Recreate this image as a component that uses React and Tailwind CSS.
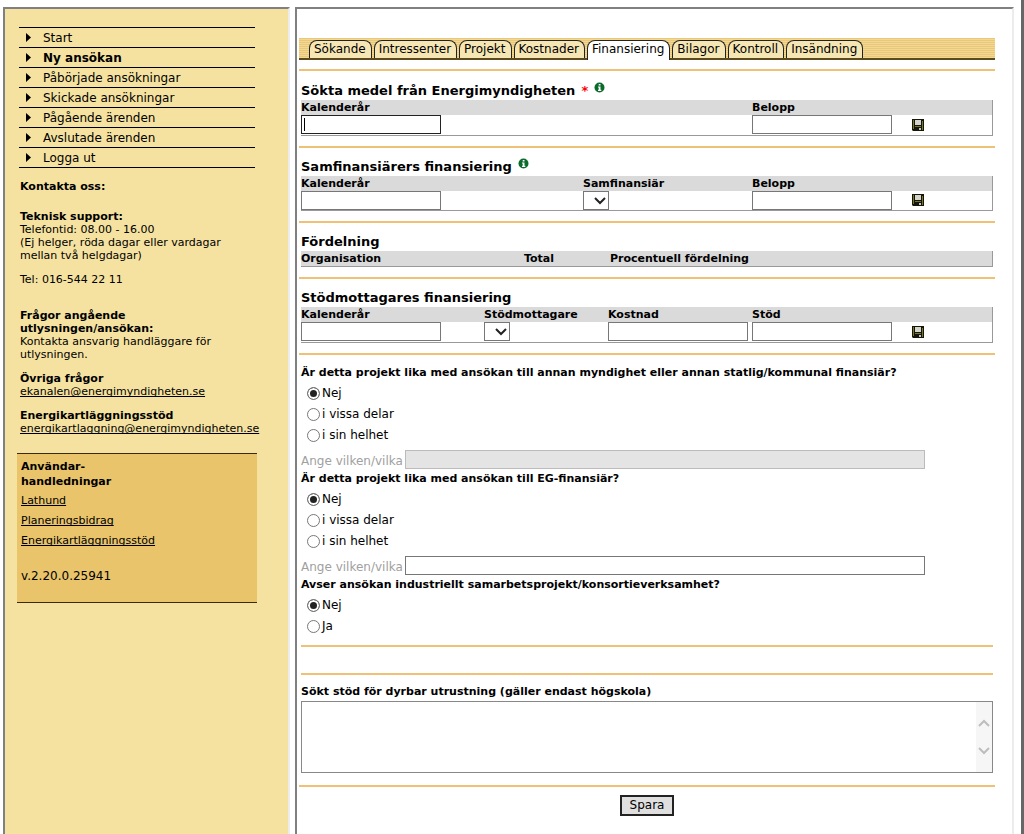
import React, { useState } from "react";
import clsx from "clsx";

const menuItems = [
  { label: "Start" },
  { label: "Ny ansökan", active: true },
  { label: "Påbörjade ansökningar" },
  { label: "Skickade ansökningar" },
  { label: "Pågående ärenden" },
  { label: "Avslutade ärenden" },
  { label: "Logga ut" },
];

const tabs = [
  "Sökande",
  "Intressenter",
  "Projekt",
  "Kostnader",
  "Finansiering",
  "Bilagor",
  "Kontroll",
  "Insändning",
];

const guides = ["Lathund", "Planeringsbidrag", "Energikartläggningsstöd"];

function Rule() {
  return <hr className="h-[2px] border-0 bg-[#efc177]" />;
}

function InfoIcon() {
  return (
    <svg className="mb-[7px] h-[11px] w-[11px]" viewBox="0 0 11 11" role="img" aria-label="Information">
      <circle cx="5.5" cy="5.5" r="5" fill="#0b6b2b" />
      <path d="M4.7 2h1.8v1.5H4.7zM4 4.5h2.5v3.3h.8V9H4V7.8h.7V5.6H4z" fill="#fff" />
    </svg>
  );
}

function SaveButton() {
  return (
    <button type="button" aria-label="Spara rad" className="block cursor-pointer">
      <svg className="h-3 w-3" viewBox="0 0 12 12">
        <path d="M0 0h12v12H1L0 11z" fill="#15150a" />
        <path d="M1 1h1v9H1zM10 2h1v9h-1zM3 7h6v1H3z" fill="#77772a" />
        <path d="M3 1h6v5H3z" fill="#d4d4cc" />
        <path d="M7 9h2v2H7z" fill="#c8c8c0" />
      </svg>
    </button>
  );
}

function TextField({ label, focused }) {
  return (
    <div className="relative w-[140px]">
      <input
        type="text"
        aria-label={label}
        className={clsx(
          "block h-[19px] w-full border bg-white px-1 text-xs outline-none",
          focused ? "border-[#222]" : "border-[#777]"
        )}
      />
      {focused && <span className="absolute top-[3px] left-[3px] h-[13px] w-px bg-black" />}
    </div>
  );
}

function DropDown({ label }) {
  return (
    <div className="relative w-[26px]">
      <select
        aria-label={label}
        className="block h-[19px] w-full appearance-none border border-[#777] bg-white text-xs"
      />
      <svg
        className="pointer-events-none absolute top-[6px] right-[3px] h-[8px] w-[12px]"
        viewBox="0 0 12 8"
        fill="none"
        stroke="#222"
        strokeWidth="2"
      >
        <path d="M1 1l5 5 5-5" />
      </svg>
    </div>
  );
}

function FormTable({ columns, noRow }) {
  return (
    <table className="w-full table-fixed border-collapse border-r border-b border-[#999] text-left">
      <colgroup>
        {columns.map((col, i) => (
          <col key={i} className={col.width} />
        ))}
      </colgroup>
      <thead className="bg-[#dadada] text-[11px] leading-[15px]">
        <tr>
          {columns.map((col, i) => (
            <th key={i} className="p-0 font-bold whitespace-nowrap">
              {col.label}
            </th>
          ))}
        </tr>
      </thead>
      {!noRow && (
        <tbody>
          <tr className="h-5">
            {columns.map((col, i) => (
              <td key={i} className="p-0 align-middle">
                {col.type === "text" && <TextField label={col.label} focused={col.focused} />}
                {col.type === "select" && <DropDown label={col.label} />}
                {col.type === "save" && <SaveButton />}
              </td>
            ))}
          </tr>
        </tbody>
      )}
    </table>
  );
}

function Section({ title, required, info, columns, noRow }) {
  return (
    <section>
      <Rule />
      <div className="pr-[2px] pb-[10px] pl-[2px]">
        <h2
          className={clsx(
            "flex items-center gap-[6px] text-[13px] leading-[18px] font-bold",
            required ? "pt-[11px]" : "pt-[10px]"
          )}
        >
          {title}
          {required && <span className="text-[#f00]">*</span>}
          {info && <InfoIcon />}
        </h2>
        <FormTable columns={columns} noRow={noRow} />
      </div>
    </section>
  );
}

function Question({ name, title, options }) {
  const [value, setValue] = useState(options[0]);
  return (
    <fieldset>
      <legend className="text-[11px] leading-5 font-bold">{title}</legend>
      {options.map((option) => (
        <label key={option} className="flex h-[21px] items-center gap-[2px] pl-[6px] text-xs">
          <input
            type="radio"
            name={name}
            checked={value === option}
            onChange={() => setValue(option)}
            className="h-[13px] w-[13px] appearance-none rounded-full border border-[#777] bg-white checked:bg-[#222] checked:shadow-[inset_0_0_0_2px_white]"
          />
          {option}
        </label>
      ))}
    </fieldset>
  );
}

function WhichField({ id, disabled }) {
  return (
    <div className="flex h-[23px] items-end gap-[2px]">
      <label htmlFor={id} className="text-xs leading-4 text-[#a0a0a0]">
        Ange vilken/vilka
      </label>
      <input
        id={id}
        type="text"
        disabled={disabled}
        className="h-[19px] w-[520px] border border-[#777] bg-white px-1 text-xs disabled:border-[#bbb] disabled:bg-[#e4e4e4]"
      />
    </div>
  );
}

function Sidebar() {
  return (
    <aside className="w-[287px] shrink-0 border-t-2 border-r-2 border-l-2 border-t-[#808080] border-r-[#ececec] border-l-[#808080] bg-[#f5e2a0] pt-[18px] pl-3">
      <nav className="mr-[33px] ml-[2px] border-t border-black">
        {menuItems.map((item) => (
          <a
            key={item.label}
            href="#"
            className={clsx(
              "flex h-5 items-center gap-3 border-b border-black pl-[7px] text-xs",
              item.active && "font-bold"
            )}
          >
            <svg className="h-[9px] w-[5px]" viewBox="0 0 5 9">
              <path d="M0 0l5 4.5L0 9z" />
            </svg>
            {item.label}
          </a>
        ))}
      </nav>

      {/* Kontakt */}
      <div className="flex flex-col gap-[11px] pt-3 pl-[3px] text-[11px] leading-[13px]">
        <p className="pb-[6px] font-bold">Kontakta oss:</p>
        <p>
          <b>Teknisk support:</b>
          <br />
          Telefontid: 08.00 - 16.00
          <br />
          (Ej helger, röda dagar eller vardagar
          <br />
          mellan två helgdagar)
        </p>
        <p className="pb-3">Tel: 016-544 22 11</p>
        <p>
          <b>
            Frågor angående
            <br />
            utlysningen/ansökan:
          </b>
          <br />
          Kontakta ansvarig handläggare för
          <br />
          utlysningen.
        </p>
        <p>
          <b>Övriga frågor</b>
          <br />
          <a href="mailto:ekanalen@energimyndigheten.se" className="underline [text-decoration-skip-ink:none]">
            ekanalen@energimyndigheten.se
          </a>
        </p>
        <p>
          <b>Energikartläggningsstöd</b>
          <br />
          <a
            href="mailto:energikartlaggning@energimyndigheten.se"
            className="underline [text-decoration-skip-ink:none]"
          >
            energikartlaggning@energimyndigheten.se
          </a>
        </p>
      </div>

      {/* Handledningar */}
      <div className="mt-[18px] mr-[31px] border-t border-b border-[#3a2c06] bg-[#e9c46b] pt-[5px] pb-4 pl-1 text-[11px]">
        <h3 className="leading-[15px] font-bold">
          Användar-
          <br />
          handledningar
        </h3>
        <ul className="pt-[2px]">
          {guides.map((guide) => (
            <li key={guide} className="leading-5">
              <a href="#" className="underline [text-decoration-skip-ink:none]">
                {guide}
              </a>
            </li>
          ))}
        </ul>
        <p className="pt-[15px] text-xs leading-5">v.2.20.0.25941</p>
      </div>
    </aside>
  );
}

function TabBar() {
  return (
    <nav className="flex h-[22px] items-end gap-[2px] border-b-2 border-[#5c4a1c] bg-[repeating-linear-gradient(#e9c878_0px,#e9c878_1px,#f3d795_1px,#f3d795_2px)] pl-[10px]">
      {tabs.map((tab) => (
        <a
          key={tab}
          href="#"
          className={clsx(
            "rounded-t-lg border border-b-0 border-[#222] pr-[5px] pl-1 text-xs leading-[17px]",
            tab === "Finansiering" ? "-mb-[2px] bg-white pb-[2px]" : "bg-[#f6e6b4]"
          )}
        >
          {tab}
        </a>
      ))}
    </nav>
  );
}

export default function App() {
  return (
    <div className="flex min-h-screen gap-[5px] border-r-[3px] border-[#666] bg-white pt-[7px] pr-[7px] pl-[3px] font-['DejaVu_Sans',sans-serif] text-black">
      <Sidebar />
      <main className="min-w-0 flex-1 border-t-2 border-r-2 border-l-2 border-t-[#808080] border-r-[#ececec] border-l-[#808080] pt-[29px] pr-[17px] pb-4 pl-[2px]">
        <TabBar />
        <form className="pt-[9px]" onSubmit={(e) => e.preventDefault()}>
          <Section
            title="Sökta medel från Energimyndigheten"
            required
            info
            columns={[
              { label: "Kalenderår", type: "text", focused: true, width: "w-[451px]" },
              { label: "Belopp", type: "text", width: "w-[160px]" },
              { type: "save" },
            ]}
          />
          <Section
            title="Samfinansiärers finansiering"
            info
            columns={[
              { label: "Kalenderår", type: "text", width: "w-[282px]" },
              { label: "Samfinansiär", type: "select", width: "w-[169px]" },
              { label: "Belopp", type: "text", width: "w-[160px]" },
              { type: "save" },
            ]}
          />
          <Section
            title="Fördelning"
            noRow
            columns={[
              { label: "Organisation", width: "w-[223px]" },
              { label: "Total", width: "w-[86px]" },
              { label: "Procentuell fördelning" },
            ]}
          />
          <Section
            title="Stödmottagares finansiering"
            columns={[
              { label: "Kalenderår", type: "text", width: "w-[183px]" },
              { label: "Stödmottagare", type: "select", width: "w-[124px]" },
              { label: "Kostnad", type: "text", width: "w-[144px]" },
              { label: "Stöd", type: "text", width: "w-[160px]" },
              { type: "save" },
            ]}
          />
          <Rule />

          {/* Frågor */}
          <div className="px-[2px] pt-2">
            <Question
              name="annanFinansiar"
              title="Är detta projekt lika med ansökan till annan myndighet eller annan statlig/kommunal finansiär?"
              options={["Nej", "i vissa delar", "i sin helhet"]}
            />
            <WhichField id="annanVilken" disabled />
            <Question
              name="egFinansiar"
              title="Är detta projekt lika med ansökan till EG-finansiär?"
              options={["Nej", "i vissa delar", "i sin helhet"]}
            />
            <WhichField id="egVilken" />
            <Question
              name="samarbete"
              title="Avser ansökan industriellt samarbetsprojekt/konsortieverksamhet?"
              options={["Nej", "Ja"]}
            />
            <div className="flex flex-col gap-[26px] pt-2">
              <Rule />
              <Rule />
            </div>
            <label htmlFor="utrustning" className="block pt-2 text-[11px] leading-[18px] font-bold">
              Sökt stöd för dyrbar utrustning (gäller endast högskola)
            </label>
            <div className="relative">
              <textarea
                id="utrustning"
                className="block h-[72px] w-full resize-none border border-[#888] bg-white p-1 pr-5 text-xs"
              />
              <div className="pointer-events-none absolute inset-y-px right-px flex w-4 flex-col items-center justify-center gap-5 bg-[#f6f6f6]">
                <svg className="h-2 w-3" viewBox="0 0 12 8" fill="none" stroke="#bdbdbd" strokeWidth="2">
                  <path d="M1 7l5-5 5 5" />
                </svg>
                <svg className="h-2 w-3" viewBox="0 0 12 8" fill="none" stroke="#bdbdbd" strokeWidth="2">
                  <path d="M1 1l5 5 5-5" />
                </svg>
              </div>
            </div>
          </div>
          <div className="pt-3">
            <Rule />
          </div>
          <div className="flex justify-center pt-2">
            <button
              type="submit"
              className="h-[21px] w-[54px] cursor-pointer border-2 border-[#222] bg-[#dfdfdf] text-xs leading-4"
            >
              Spara
            </button>
          </div>
        </form>
      </main>
    </div>
  );
}
